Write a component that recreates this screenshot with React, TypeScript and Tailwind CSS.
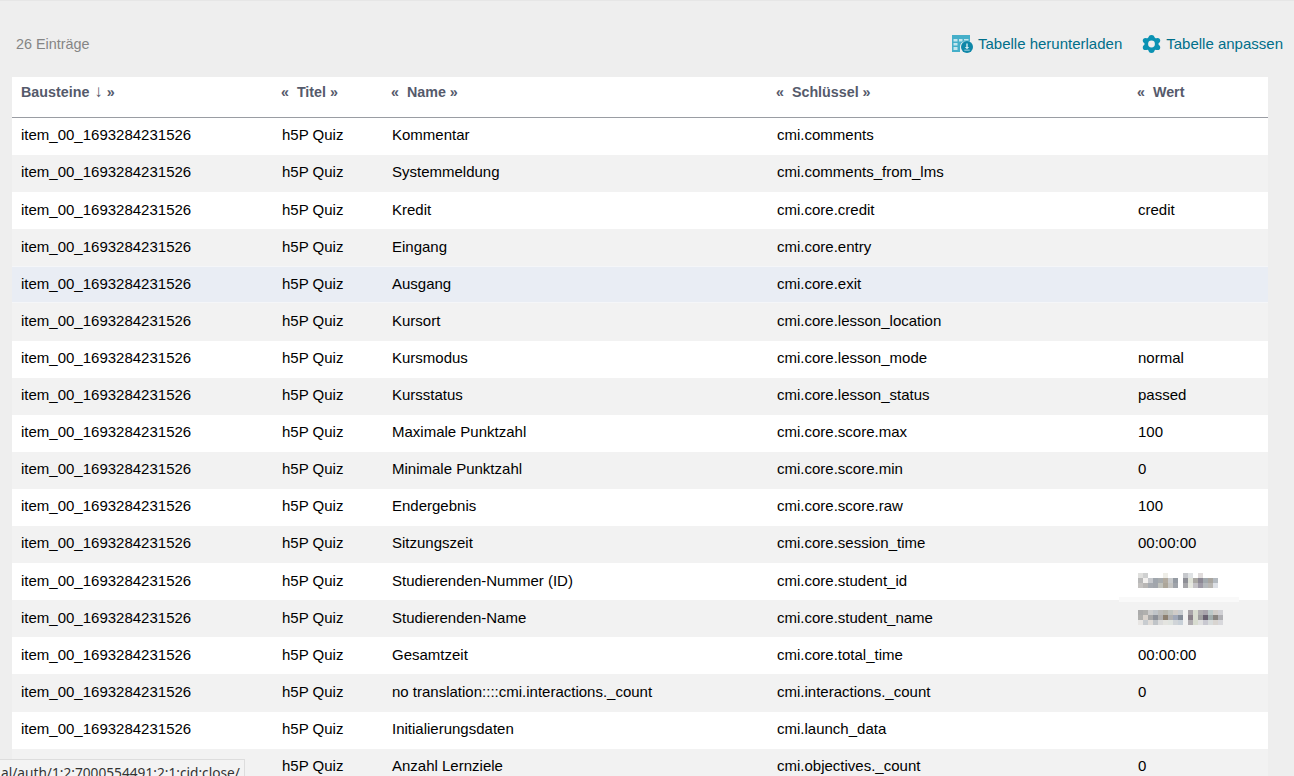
import React from 'react';

const rows: [string, string, string][] = [
  ['Kommentar', 'cmi.comments', ''],
  ['Systemmeldung', 'cmi.comments_from_lms', ''],
  ['Kredit', 'cmi.core.credit', 'credit'],
  ['Eingang', 'cmi.core.entry', ''],
  ['Ausgang', 'cmi.core.exit', ''],
  ['Kursort', 'cmi.core.lesson_location', ''],
  ['Kursmodus', 'cmi.core.lesson_mode', 'normal'],
  ['Kursstatus', 'cmi.core.lesson_status', 'passed'],
  ['Maximale Punktzahl', 'cmi.core.score.max', '100'],
  ['Minimale Punktzahl', 'cmi.core.score.min', '0'],
  ['Endergebnis', 'cmi.core.score.raw', '100'],
  ['Sitzungszeit', 'cmi.core.session_time', '00:00:00'],
  ['Studierenden-Nummer (ID)', 'cmi.core.student_id', '#blur'],
  ['Studierenden-Name', 'cmi.core.student_name', '#blur'],
  ['Gesamtzeit', 'cmi.core.total_time', '00:00:00'],
  ['no translation::::cmi.interactions._count', 'cmi.interactions._count', '0'],
  ['Initialierungsdaten', 'cmi.launch_data', ''],
  ['Anzahl Lernziele', 'cmi.objectives._count', '0'],
];

function DownloadIcon() {
  return (
    <svg width="21" height="18" viewBox="0 0 21 18" className="shrink-0">
      <path fill="#45afc9" d="M0 0h18v6.500h-6a6 6 0 0 0-4 5V17H0z" />
      <path fill="#c4e6ee" d="M1.500 4h4v2.500h-4zM7 4h3.500v2.500H7zM12 4h4.500v1.500H12zM1.500 8h4v2.500h-4zM1.500 12h4v3h-4z" />
      <circle cx="15" cy="12" r="6" fill="#0f87a8" />
      <path fill="#d4ecf2" d="M14.300 8.500h1.400v3.500h1.500L15 14.200 12.800 12h1.500zM12.300 14.800h5.400v.8h-5.400z" />
    </svg>
  );
}

function GearIcon() {
  return (
    <svg width="19" height="18" viewBox="0 0 19 18" className="shrink-0">
      <g fill="#0b92b3">
        <circle cx="9.500" cy="9" r="7.200" />
        <circle cx="9.500" cy="3" r="3" />
        <circle cx="9.500" cy="15" r="3" />
        <circle cx="3.500" cy="5.600" r="2.700" />
        <circle cx="15.500" cy="5.600" r="2.700" />
        <circle cx="3.500" cy="12.400" r="2.700" />
        <circle cx="15.500" cy="12.400" r="2.700" />
      </g>
      <circle cx="9.500" cy="9" r="3.400" fill="#eeeeee" />
    </svg>
  );
}

function Blurred({ tones }: { tones: string[][] }) {
  return (
    <svg width="85" height="15" viewBox="0 0 17 3" shapeRendering="crispEdges" className="block">
      {tones.map((line, y) =>
        line.map((c, x) => (c ? <rect key={`${x}-${y}`} x={x} y={y} width="1" height="1" fill={c} /> : null)),
      )}
    </svg>
  );
}

const blurA = [
  ['#e0e0de', '#cfd0d0', '', '', '', '#efeee8', '', '', '', '#c6c8cc', '#dfe2e4', '', '#e0dcdc', '', '', '', ''],
  ['#b8b8b8', '#f2f0ee', '#c6c8cc', '#a0a6ad', '#a8acae', '#b2aba0', '#c8cacc', '#959ba3', '', '#8e8f96', '#dfe2d8', '#aaa8a4', '#8c8894', '#a3aaae', '#a9a59f', '#b4bac0'],
  ['#c4c2c0', '#b8b6b4', '#a6aab0', '#a2a6ac', '#c0c2bc', '#aca69a', '#c4c4c2', '#9fa3aa', '', '#a6a6aa', '#e6e8e0', '#c4c2c6', '#9e9aa6', '#b5b9bc', '#b8b6b2', '#dde0e6'],
];
const blurB = [
  ['#ababab', '#b0b0ae', '#cccccc', '#c0c4c8', '#bcbcba', '#b8b8b0', '#c0c4c0', '#d0ccc8', '#c8ccd0', '', '#a8a4a8', '#d8dcd0', '#b0aeb0', '#a8a4ac', '#bcc8c8', '#d0ccc8', '#d0d0d4'],
  ['#b0b0ae', '#d8d2cc', '#a8a8a8', '#8c9098', '#b0b0b0', '#8c8070', '#b0b0b0', '#a0a8b8', '#848c98', '', '#888088', '#d8dcd0', '#a0a0a0', '#686070', '#a0acac', '#888480', '#b0b0b4'],
  ['#e8e6e4', '#c8ccd0', '#e0dcd8', '#c0c4c8', '#dcdcdc', '#e4e4e0', '#e0e4e0', '#d0d4d8', '#c8d0d8', '', '#b0acb0', '#d8dcd0', '#e0e0e0', '#c8c8d0', '#d8dcdc', '#d8d4d0', '#d8d8dc'],
];

export default function App() {
  return (
    <div className="relative h-[776px] overflow-hidden bg-[#eeeeee] font-['Liberation_Sans',Arial,sans-serif] text-[15px]">
      <div className="h-px bg-[#e6e6e6]" />
      <div className="flex h-[76px] items-center justify-between pb-[5px] pl-4 pr-[11px] pt-[15px]">
        <span className="pt-px text-[14.4px] text-[#858585]">26 Einträge</span>
        <div className="flex items-center gap-5 text-[#006f8a]">
          <a className="flex items-center gap-[5px]">
            <DownloadIcon />
            Tabelle herunterladen
          </a>
          <a className="flex items-center gap-[5px]">
            <GearIcon />
            Tabelle anpassen
          </a>
        </div>
      </div>

      <div className="ml-3 w-[1256px]">
        <div className="grid h-[41px] grid-cols-[260px_110px_385px_361px_140px] border-b border-[#9a9da3] bg-white pt-[5px] text-[14.3px] font-bold text-[#555a6b]">
          <div className="pl-[9px]">
            <span>Bausteine</span> <span className="ml-px font-normal text-[17px] leading-[17px]">↓</span> »
          </div>
          <div className="pl-[9px]">«&nbsp; Titel »</div>
          <div className="pl-[9px]">«&nbsp; Name »</div>
          <div className="pl-[9px]">«&nbsp; Schlüssel »</div>
          <div className="pl-[9px]">«&nbsp; Wert</div>
        </div>
        {rows.map(([name, key, value], i) => (
          <div
            key={key}
            className={`grid h-[37.1px] grid-cols-[260px_110px_385px_361px_140px] items-center pb-[1.8px] text-black ${
              i === 4 ? 'border-y border-[#f5f6f8] bg-[#e9edf4]' : i % 2 === 0 ? 'bg-white' : 'bg-[#f2f2f2]'
            }`}
          >
            <div className="pl-[9px]">item_00_1693284231526</div>
            <div className="pl-[10px]">h5P Quiz</div>
            <div className="pl-[10px]">{name}</div>
            <div className="pl-[10px]">{key}</div>
            <div className="pl-[10px]">
              {value === '#blur' ? <Blurred tones={i === 12 ? blurA : blurB} /> : value}
            </div>
          </div>
        ))}
      </div>

      <div className="absolute left-[1119px] top-[597px] h-[5px] w-[120px] bg-[#f9f9f9]" />
      <div className="absolute left-0 top-[759px] h-[17px] w-[245px] overflow-hidden whitespace-nowrap border border-b-0 border-l-0 border-[#dddddd] bg-[#f3f3f3] font-['Noto_Sans',sans-serif] text-[13.7px] leading-[26px] text-[#333333]">
        <span className="block pl-px">al/auth/1:2:7000554491:2:1:cid:close/</span>
      </div>
    </div>
  );
}
